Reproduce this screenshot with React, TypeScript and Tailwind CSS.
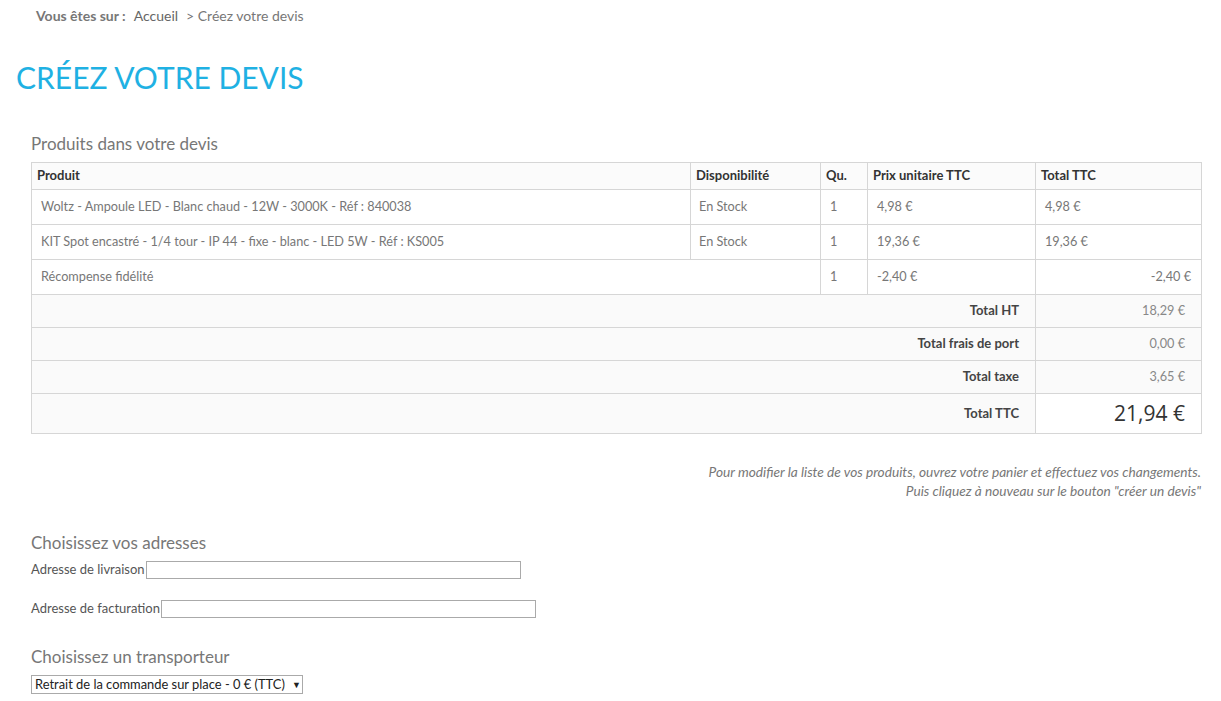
import React from "react";

const products = [
  {
    name: "Woltz - Ampoule LED - Blanc chaud - 12W - 3000K - Réf : 840038",
    dispo: "En Stock",
    qty: "1",
    unit: "4,98 €",
    total: "4,98 €",
  },
  {
    name: "KIT Spot encastré - 1/4 tour - IP 44 - fixe - blanc - LED 5W - Réf : KS005",
    dispo: "En Stock",
    qty: "1",
    unit: "19,36 €",
    total: "19,36 €",
  },
];

const totals = [
  { label: "Total HT", value: "18,29 €" },
  { label: "Total frais de port", value: "0,00 €" },
  { label: "Total taxe", value: "3,65 €" },
];

export default function App() {
  return (
    <div className="min-h-[701px] bg-white text-[13px] text-[#777] font-['Lato','Open_Sans',sans-serif]">
      {/* breadcrumb */}
      <div className="pl-[36px] pt-[6px] h-[26px] text-[14px] leading-[20px]">
        <span className="font-bold text-[#777]">Vous êtes sur :</span>
        <span className="ml-[8px] text-[#666]">Accueil</span>
        <span className="ml-[8px] text-[#777]">&gt; Créez votre devis</span>
      </div>

      <h1 className="pl-[16px] mt-[32px] text-[30px] leading-[38px] text-[#1fb1e3] font-normal">
        CRÉEZ VOTRE DEVIS
      </h1>

      <div className="px-[31px] pr-[20px] mt-[37px]">
        <h2 className="text-[17px] leading-[22px] text-[#777] mb-[7px]">Produits dans votre devis</h2>
        <table className="w-[1170px] border-collapse table-fixed border border-[#d6d6d6]">
          <colgroup>
            <col className="w-[659px]" />
            <col className="w-[130px]" />
            <col className="w-[47px]" />
            <col className="w-[168px]" />
            <col className="w-[166px]" />
          </colgroup>
          <thead>
            <tr className="h-[27px] bg-[#fbfbfb] text-[#333] font-bold text-left">
              <th className="border border-[#d6d6d6] pl-[5px] font-bold">Produit</th>
              <th className="border border-[#d6d6d6] pl-[5px] font-bold">Disponibilité</th>
              <th className="border border-[#d6d6d6] pl-[5px] font-bold">Qu.</th>
              <th className="border border-[#d6d6d6] pl-[5px] font-bold">Prix unitaire TTC</th>
              <th className="border border-[#d6d6d6] pl-[5px] font-bold">Total TTC</th>
            </tr>
          </thead>
          <tbody className="text-[12.7px]">
            {products.map((p) => (
              <tr key={p.name} className="h-[35px]">
                <td className="border border-[#d6d6d6] pl-[9px]">{p.name}</td>
                <td className="border border-[#d6d6d6] pl-[8px]">{p.dispo}</td>
                <td className="border border-[#d6d6d6] pl-[9px]">{p.qty}</td>
                <td className="border border-[#d6d6d6] pl-[9px]">{p.unit}</td>
                <td className="border border-[#d6d6d6] pl-[9px]">{p.total}</td>
              </tr>
            ))}
            <tr className="h-[35px]">
              <td colSpan={2} className="border border-[#d6d6d6] pl-[9px]">Récompense fidélité</td>
              <td className="border border-[#d6d6d6] pl-[9px]">1</td>
              <td className="border border-[#d6d6d6] pl-[9px]">-2,40 €</td>
              <td className="border border-[#d6d6d6] pr-[10px] text-right">-2,40 €</td>
            </tr>
            {totals.map((t) => (
              <tr key={t.label} className="h-[33px] bg-[#fafafa]">
                <td colSpan={4} className="border border-[#d6d6d6] pr-[16px] text-right font-bold text-[13px] text-[#444]">
                  {t.label}
                </td>
                <td className="border border-[#d6d6d6] pr-[16px] text-right text-[#888]">{t.value}</td>
              </tr>
            ))}
            <tr className="h-[40px]">
              <td colSpan={4} className="border border-[#d6d6d6] bg-[#fafafa] pr-[16px] text-right font-bold text-[13px] text-[#444]">
                Total TTC
              </td>
              <td className="border border-[#d6d6d6] bg-white pr-[16px] text-right text-[21px] text-[#333] font-['Open_Sans',sans-serif]">
                21,94 €
              </td>
            </tr>
          </tbody>
        </table>

        <p className="mt-[28px] w-[1170px] text-right italic text-[13.7px] leading-[19px] text-[#777]">
          Pour modifier la liste de vos produits, ouvrez votre panier et effectuez vos changements.
          <br />
          Puis cliquez à nouveau sur le bouton "créer un devis"
        </p>

        <h2 className="mt-[32px] text-[17px] leading-[22px] text-[#777]">Choisissez vos adresses</h2>
        <div className="mt-[7px] flex items-center h-[18px]">
          <label className="text-[#555] mr-[1px]">Adresse de livraison</label>
          <input className="w-[375px] h-[18px] border border-[#aaa] bg-white" />
        </div>
        <div className="mt-[21px] flex items-center h-[18px]">
          <label className="text-[#555] mr-[1px]">Adresse de facturation</label>
          <input className="w-[375px] h-[18px] border border-[#aaa] bg-white" />
        </div>

        <h2 className="mt-[28px] text-[17px] leading-[22px] text-[#777]">Choisissez un transporteur</h2>
        <div className="mt-[7px] w-[272px] h-[19px] border border-[#aaa] flex items-center pl-[3px] text-[12.9px] text-[#222]">
          <span>Retrait de la commande sur place - 0 € (TTC)</span>
          <span className="ml-[7px] text-[9px]">▼</span>
        </div>
      </div>
    </div>
  );
}
